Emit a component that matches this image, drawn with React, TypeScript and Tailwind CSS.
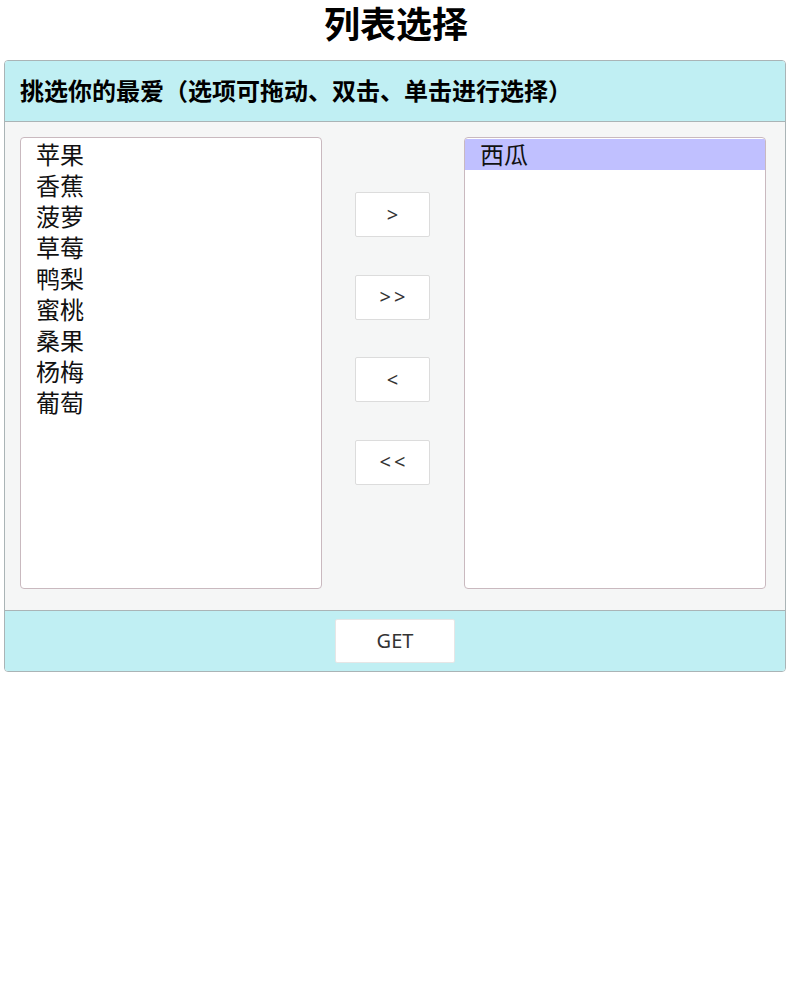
import React, { useState } from 'react';

const FONT = { fontFamily: '"Noto Sans", "Noto Sans CJK SC", sans-serif' };

const initialLeft = ['苹果', '香蕉', '菠萝', '草莓', '鸭梨', '蜜桃', '桑果', '杨梅', '葡萄'];
const initialRight = ['西瓜'];

function ListBox({
  items,
  selected,
  onSelect,
}: {
  items: string[];
  selected: string | null;
  onSelect: (v: string) => void;
}) {
  return (
    <div className="w-[302px] h-[452px] bg-white border border-[#c9b9bf] rounded-[4px] overflow-hidden pt-[1px]">
      {items.map((item) => (
        <div
          key={item}
          onClick={() => onSelect(item)}
          className={
            'pl-[15px] text-[24px] leading-[31px] h-[31px] text-[#111] cursor-pointer select-none ' +
            (selected === item ? 'bg-[#c0c0ff]' : '')
          }
        >
          {item}
        </div>
      ))}
    </div>
  );
}

function MoveButton({ label, onClick }: { label: string; onClick: () => void }) {
  return (
    <button
      onClick={onClick}
      className="w-[75px] h-[45px] bg-white border border-[#dcdcdc] rounded-[2px] text-[20px] text-[#333] tracking-[3px] pl-[3px]"
    >
      {label}
    </button>
  );
}

export default function App() {
  const [left, setLeft] = useState<string[]>(initialLeft);
  const [right, setRight] = useState<string[]>(initialRight);
  const [selLeft, setSelLeft] = useState<string | null>(null);
  const [selRight, setSelRight] = useState<string | null>('西瓜');

  const moveRight = () => {
    if (!selLeft) return;
    setLeft(left.filter((x) => x !== selLeft));
    setRight([...right, selLeft]);
    setSelLeft(null);
  };
  const moveAllRight = () => {
    setRight([...right, ...left]);
    setLeft([]);
  };
  const moveLeft = () => {
    if (!selRight) return;
    setRight(right.filter((x) => x !== selRight));
    setLeft([...left, selRight]);
    setSelRight(null);
  };
  const moveAllLeft = () => {
    setLeft([...left, ...right]);
    setRight([]);
  };

  return (
    <div className="w-[792px] bg-white" style={FONT}>
      <h1 className="h-[50px] leading-[50px] mb-[10px] text-center text-[36px] font-bold text-black">
        列表选择
      </h1>
      <div className="mx-[4px] w-[782px] border border-[#aab4b6] rounded-[4px] overflow-hidden">
        <div className="h-[61px] bg-[#c0eff3] border-b border-[#aab4b6] flex items-center px-[15px]">
          <span className="text-[24px] font-bold text-black">挑选你的最爱（选项可拖动、双击、单击进行选择）</span>
        </div>
        <div className="bg-[#f5f6f6] flex pl-[15px] pr-[18px] pt-[15px] pb-[21px] border-b border-[#aab4b6]">
          <ListBox items={left} selected={selLeft} onSelect={setSelLeft} />
          <div className="w-[142px] flex flex-col items-center gap-[37.5px] pt-[55px] pr-[1px]">
            <MoveButton label=">" onClick={moveRight} />
            <MoveButton label=">>" onClick={moveAllRight} />
            <MoveButton label="<" onClick={moveLeft} />
            <MoveButton label="<<" onClick={moveAllLeft} />
          </div>
          <ListBox items={right} selected={selRight} onSelect={setSelRight} />
        </div>
        <div className="h-[60px] bg-[#c0eff3] flex items-center justify-center">
          <button className="w-[120px] h-[44px] bg-white border border-[#e6e6e6] rounded-[2px] text-[20px] text-[#333]">
            GET
          </button>
        </div>
      </div>
    </div>
  );
}
